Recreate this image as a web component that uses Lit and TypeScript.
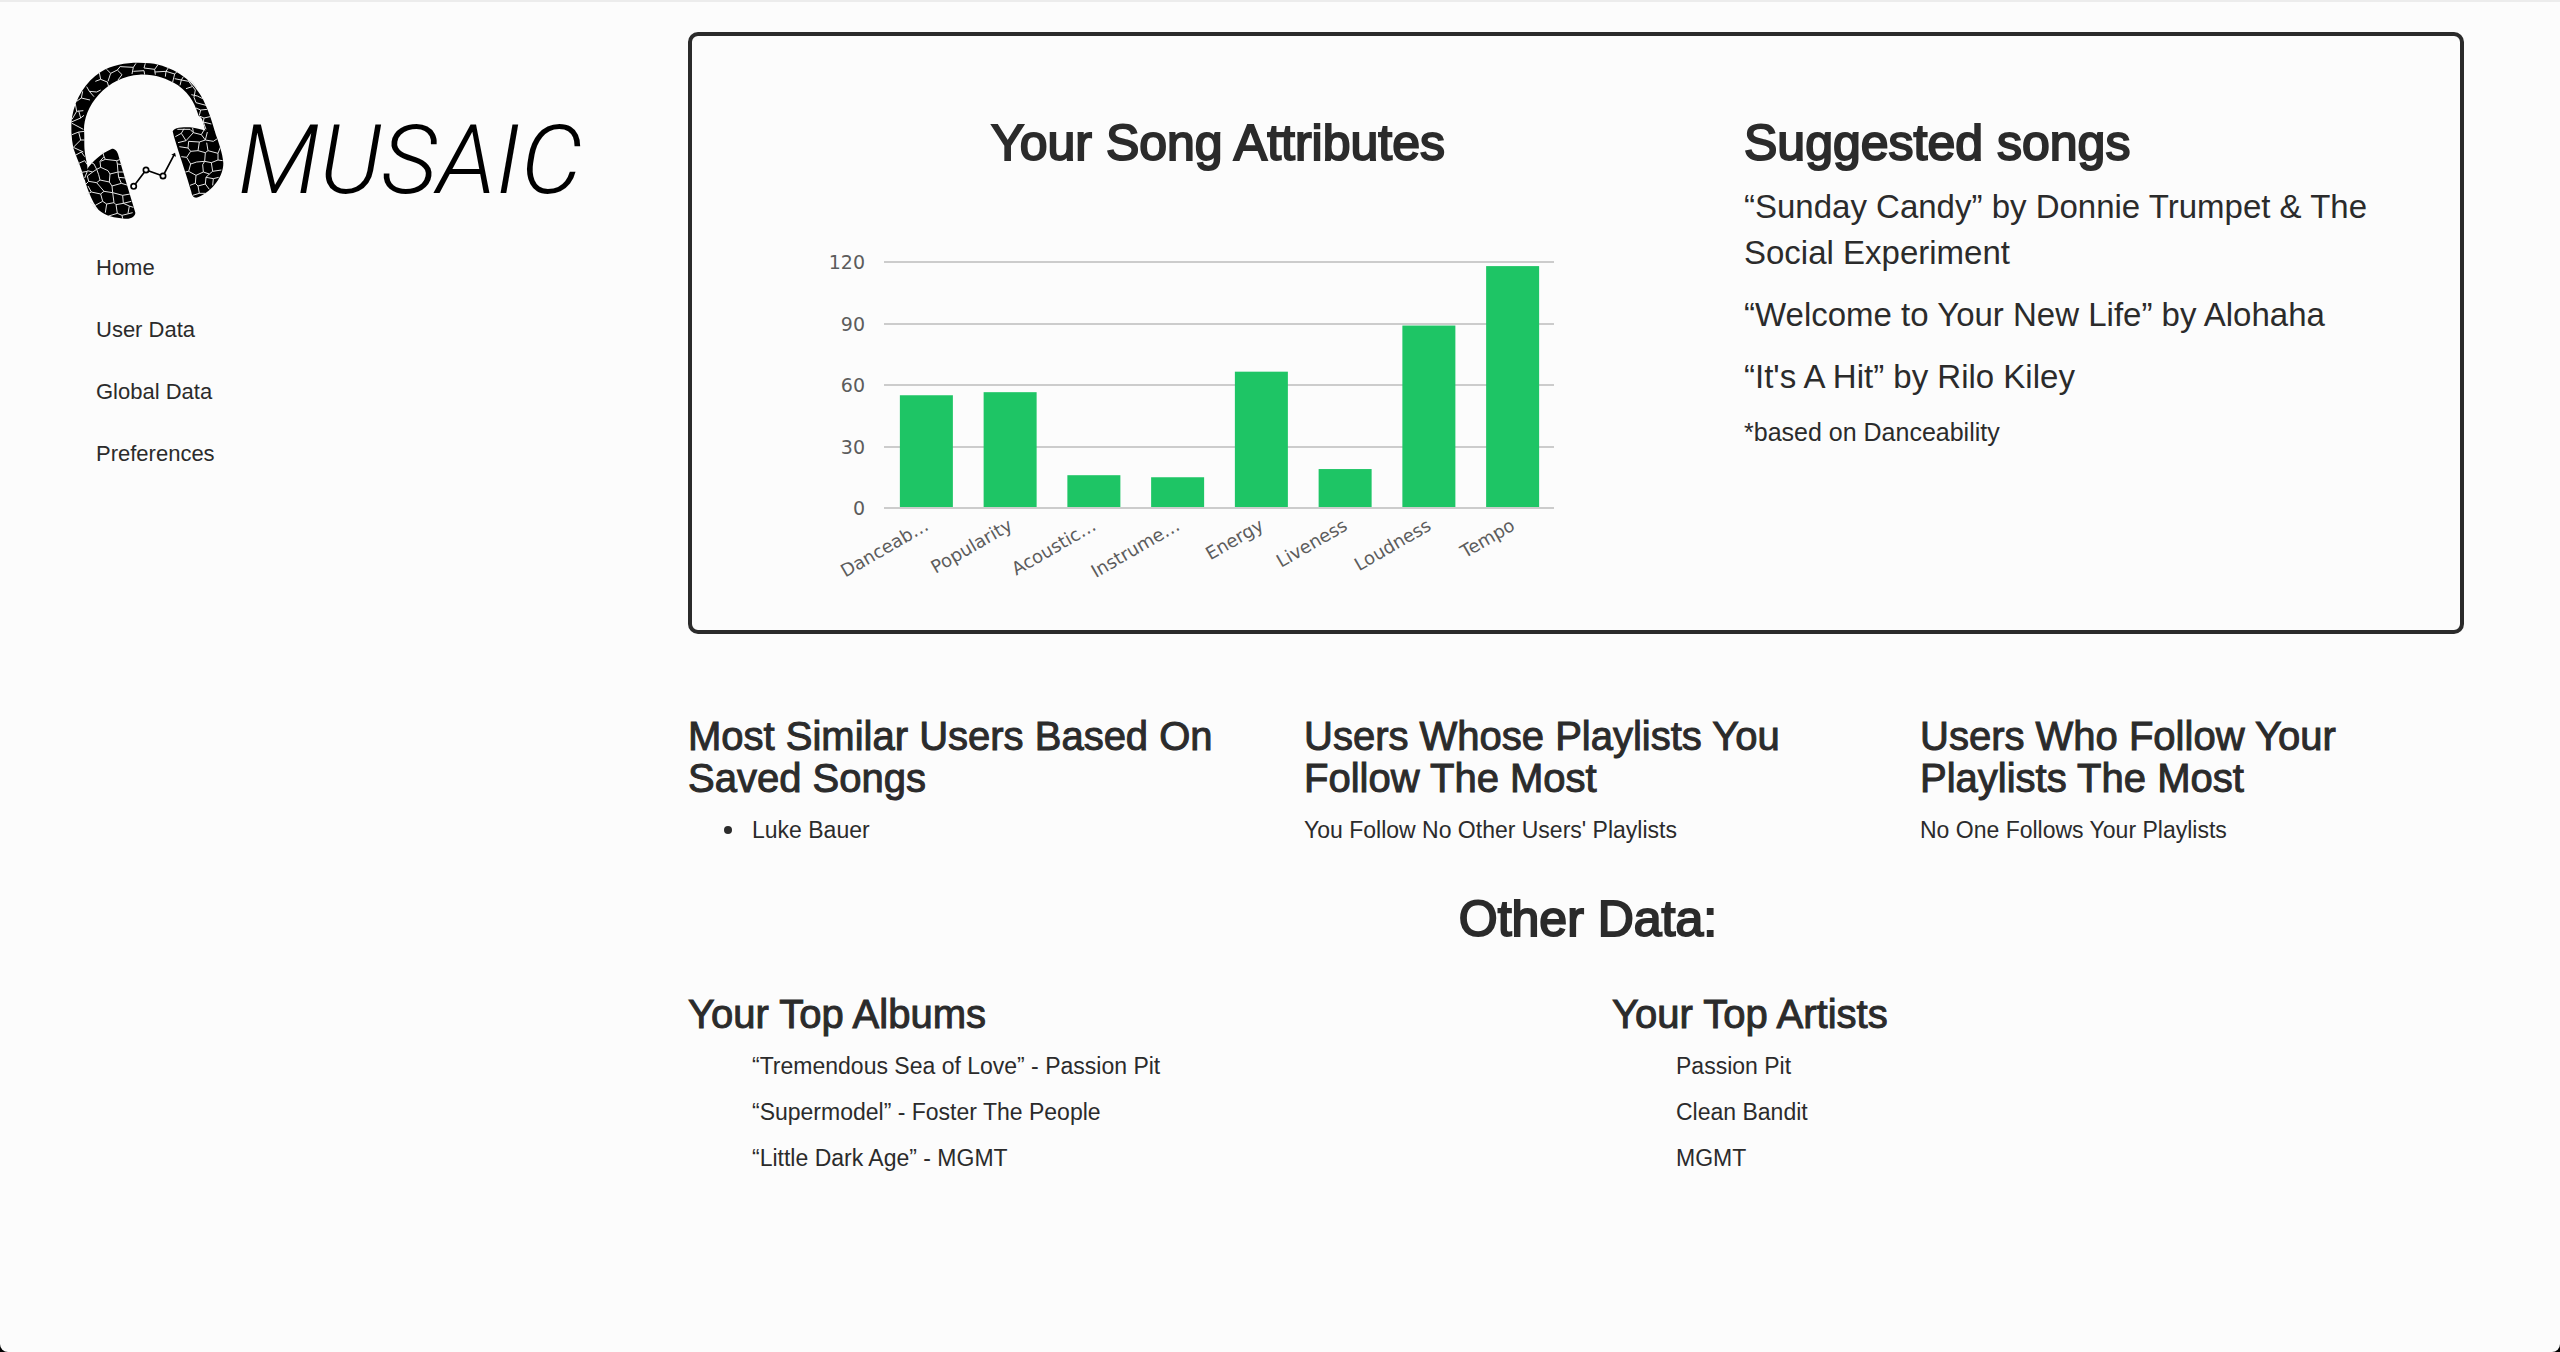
import { LitElement, html, svg, css } from "lit";
import { customElement } from "lit/decorators.js";

const NAV = ["Home", "User Data", "Global Data", "Preferences"];

const SONGS = [
  "“Sunday Candy” by Donnie Trumpet & The Social Experiment",
  "“Welcome to Your New Life” by Alohaha",
  "“It's A Hit” by Rilo Kiley",
];

const ATTRIBUTES: [string, number][] = [
  ["Danceab…", 55],
  ["Popularity", 56.5],
  ["Acoustic…", 16],
  ["Instrume…", 15],
  ["Energy", 66.5],
  ["Liveness", 19],
  ["Loudness", 89],
  ["Tempo", 118],
];

const ALBUMS = [
  "“Tremendous Sea of Love” - Passion Pit",
  "“Supermodel” - Foster The People",
  "“Little Dark Age” - MGMT",
];

const ARTISTS = ["Passion Pit", "Clean Bandit", "MGMT"];

@customElement("musaic-logo")
export class MusaicLogo extends LitElement {
  static styles = css`
    :host { display: flex; align-items: flex-start; }
    .mark { width: 156px; height: 160px; flex: none; }
    .word {
      margin: 42px 0 0 12px;
      font: italic 300 97px/112px Roboto, sans-serif;
      color: #000;
    }
    .cells { fill: none; stroke: #e4e4e4; stroke-width: 3; stroke-linejoin: round; }
  `;

  render() {
    return html`
      <svg class="mark" viewBox="32 38 468 480" role="img" aria-label="Headphones">
        <path d="M75 392 C66 352 50 322 42 296 C36 266 34 234 38 204 C48 146 78 98 124 68 C168 40 226 38 272 42 C340 50 396 90 424 138 C446 176 460 222 468 252 L438 244 C432 222 430 204 418 200 C410 174 396 136 356 108 C320 86 282 74 240 76 C196 78 150 100 118 136 C88 168 74 210 74 240 C76 268 74 286 76 304 C78 328 86 346 84 362 Z"/>
        <path d="M82 362 C98 336 126 312 158 298 C166 298 172 302 176 314 C192 372 210 430 228 490 C228 500 216 510 196 508 C166 506 138 500 118 482 C96 456 78 404 74 380 Z"/>
        <path d="M340 246 C346 234 366 234 392 234 C412 236 430 242 442 244 L466 246 C478 280 490 312 492 342 C492 380 462 424 416 444 C404 448 398 440 396 428 C380 370 360 318 344 262 Z"/>
        <g class="cells">
          <path d="M38 210 L52 186 L72 184 M52 186 L48 164 M52 156 L66 146 L92 152 M66 146 L70 126 M82 112 L90 126 L112 128 L124 122 M90 126 L104 142 M108 96 L124 90 L144 98 L148 112 M124 90 L120 70 M142 60 L154 72 L146 96 M154 72 L174 62 L188 76 L176 92 M174 62 L184 50 M184 52 L222 54 L218 74 M222 54 L230 42 M222 66 L254 64 L256 76 M254 56 L258 42 M254 56 L286 60 L288 76 M286 60 L296 46 M286 68 L320 66 L318 82 M320 66 L328 54 M320 66 L346 74 L340 98 M346 74 L354 66 M346 88 L366 92 L362 108 M366 92 L388 96 L408 122 L404 144 M366 92 L372 82 M380 118 L398 112 M386 94 L398 96 L412 116 M396 136 L414 140 L434 150 M404 144 L410 160 L440 168 M410 176 L424 182 L444 180 M424 182 L420 198 M420 200 L434 206 L452 202 M434 206 L432 218 L456 224 M432 218 L440 240"/>
          <path d="M36 218 L64 206 L74 198 M64 206 L58 184 M38 222 L72 240 M38 256 L58 248 L76 246 M58 248 L64 272 L76 272 M64 272 L42 294 L72 308 M48 318 L66 308 L76 322 M54 344 L76 334 L84 346 M62 370 L84 366 L76 386"/>
          <path d="M84 364 L100 368 L112 360 L104 344 L96 340 M112 360 L124 354 L122 336 L134 322 L130 308 M134 322 L138 330 L172 334 L184 330 M138 330 L124 336 M172 334 L174 344 L190 346 M174 344 L176 368 L194 368 M176 368 L152 374 L146 364 L124 354 M152 374 L150 398 L122 392 L112 400 L88 396 L84 380 L100 368 M88 396 L80 404 M122 392 L118 376 L112 360 M150 398 L158 410 L186 402 L206 408 M176 368 L178 384 L200 386 M178 384 L186 402 M158 410 L160 430 L134 426 L112 400 M134 426 L124 434 L96 428 L86 410 M96 428 L84 434 M124 434 L130 456 L108 468 L92 458 M130 456 L142 464 L164 460 L160 430 L190 438 L212 434 M190 438 L192 462 L216 456 M192 462 L170 466 L164 460 M142 464 L138 490 M170 466 L174 492 L148 500 M174 492 L188 498 L220 490 M192 462 L210 470 L222 474 M210 470 L206 492 M188 498 L190 508 M100 468 L112 480"/>
          <path d="M348 262 L366 252 L374 238 M366 252 L380 274 L356 280 M380 274 L402 250 L400 236 M402 250 L426 256 L434 242 M402 250 L392 240 L354 240 M426 256 L438 272 L462 276 L474 268 M438 272 L444 248 M438 272 L420 278 L416 304 L394 306 L386 296 L360 292 M386 296 L388 276 L420 278 M416 304 L438 310 L446 304 L442 280 M446 304 L476 312 L484 292 M438 310 L436 336 L412 338 L394 344 L382 324 L394 306 M382 324 L366 322 M394 344 L388 366 L410 378 L432 368 L430 346 L436 336 L456 340 L476 332 L476 312 M476 332 L490 334 M456 340 L460 366 L486 362 M460 366 L450 374 L432 368 M388 366 L378 368 M410 378 L408 402 L392 408 M408 402 L416 410 L438 404 L440 384 L450 374 M440 384 L462 388 L478 384 M462 388 L460 408 M416 410 L420 432 L438 432 M438 404 L450 420 M400 438 L420 432"/>
        </g>
        <path d="M223 411 L260 362 L311 380 L345 315" fill="none" stroke="#000" stroke-width="5"/>
        <g fill="#fcfcfc" stroke="#000" stroke-width="5">
          <circle cx="223" cy="411" r="8"/><circle cx="260" cy="362" r="8"/><circle cx="311" cy="380" r="8"/>
        </g>
        <path d="M336 316 L347 310 L350 322 Z"/>
      </svg>
      <span class="word">MUSAIC</span>
    `;
  }
}

@customElement("attribute-chart")
export class AttributeChart extends LitElement {
  static styles = css`
    :host { display: block; }
    .chart { display: block; width: 100%; height: auto; overflow: visible; }
    .tick { font: 19px "DejaVu Sans", Verdana, sans-serif; fill: #5c5c5c; }
    .label { font: 18px "DejaVu Sans", Verdana, sans-serif; fill: #5c5c5c; }
    .grid { stroke: #ccc; stroke-width: 2; }
    .bar { fill: #1ec565; }
  `;

  render() {
    const left = 46, width = 670, base = 283, unit = 246 / 120;
    const slot = width / ATTRIBUTES.length;
    return html`
      <svg class="chart" viewBox="0 0 760 363" role="img" aria-label="Your song attributes">
        ${[0, 30, 60, 90, 120].map((v) => {
          const y = Math.round(base - v * unit);
          return svg`
            <line class="grid" x1=${left} x2=${left + width} y1=${y} y2=${y}></line>
            <text class="tick" x="27" y=${y + 7} text-anchor="end">${v}</text>`;
        })}
        ${ATTRIBUTES.map(([name, v], i) => {
          const mid = left + slot * (i + 0.5);
          const height = v * unit - 1;
          return svg`
            <rect class="bar" x=${mid - 26} width="53" y=${base - 1 - height} height=${height}></rect>
            <text class="label" text-anchor="end" transform="translate(${mid + 4} ${base + 21}) rotate(-30)">${name}</text>`;
        })}
      </svg>
    `;
  }
}

@customElement("app-root")
export class AppRoot extends LitElement {
  static styles = css`
    :host {
      display: block;
      background: #000;
      color: #2b2b2b;
      font: 23px/30px "Liberation Sans", Arial, sans-serif;
    }
    * { box-sizing: border-box; }
    .page {
      display: grid;
      grid-template-columns: 616px minmax(0, 1fr);
      column-gap: 72px;
      min-height: 100vh;
      padding-bottom: 48px;
      border-top: 2px solid #ececec;
      border-radius: 0 0 8px 8px;
      background: #fcfcfc;
    }
    .side { padding: 60px 0 0 70px; }
    .menu { display: flex; flex-direction: column; gap: 32px; margin-top: 31px; padding-left: 26px; font-size: 22px; }
    .menu a { color: inherit; text-decoration: none; }
    h1, h2, h3, p, ul { margin: 0; padding: 0; font-weight: 400; }
    h1, h2 { font-size: 50px; line-height: 54px; -webkit-text-stroke: 2px #2b2b2b; }
    h3 { font-size: 40px; line-height: 42px; -webkit-text-stroke: 1px #2b2b2b; }
    .main { padding: 30px 96px 0 0; }
    .card {
      display: grid;
      grid-template-columns: 1052px minmax(0, 1fr);
      padding: 80px 88px 42px 0;
      border: 4px solid #2b2b2b;
      border-radius: 10px;
    }
    .plot { display: flex; flex-direction: column; align-items: center; }
    .plot attribute-chart { width: 760px; margin-top: 55px; }
    .songs { display: flex; flex-direction: column; gap: 16px; margin-top: 14px; font-size: 33px; line-height: 46px; list-style: none; }
    .note { margin-top: 14px; font-size: 25px; line-height: 36px; }
    .thirds { display: grid; grid-template-columns: repeat(3, minmax(0, 1fr)); column-gap: 72px; margin-top: 81px; }
    .halves { display: grid; grid-template-columns: repeat(2, minmax(0, 1fr)); column-gap: 72px; margin-top: 47px; }
    .list { margin-top: 16px; padding-left: 64px; list-style: none; }
    .text { margin-top: 16px; }
    .plain { display: flex; flex-direction: column; gap: 16px; }
    .bulleted { padding-left: 36px; }
    .bulleted li { display: flex; align-items: center; gap: 20px; }
    .bulleted li::before { content: ""; width: 8px; height: 8px; border-radius: 50%; background: #2b2b2b; }
    .other { margin-top: 47px; padding-left: 24px; text-align: center; }
  `;

  render() {
    return html`
      <div class="page">
        <aside class="side">
          <musaic-logo></musaic-logo>
          <nav class="menu">${NAV.map((n) => html`<a href="#">${n}</a>`)}</nav>
        </aside>
        <main class="main">
          <section class="card">
            <div class="plot">
              <h1>Your Song Attributes</h1>
              <attribute-chart></attribute-chart>
            </div>
            <div>
              <h2>Suggested songs</h2>
              <ul class="songs">${SONGS.map((s) => html`<li>${s}</li>`)}</ul>
              <p class="note">*based on Danceability</p>
            </div>
          </section>
          <section class="thirds">
            <div>
              <h3>Most Similar Users Based On Saved Songs</h3>
              <ul class="list bulleted"><li>Luke Bauer</li></ul>
            </div>
            <div>
              <h3>Users Whose Playlists You Follow The Most</h3>
              <p class="text">You Follow No Other Users' Playlists</p>
            </div>
            <div>
              <h3>Users Who Follow Your Playlists The Most</h3>
              <p class="text">No One Follows Your Playlists</p>
            </div>
          </section>
          <h2 class="other">Other Data:</h2>
          <section class="halves">
            <div>
              <h3>Your Top Albums</h3>
              <ul class="list plain">${ALBUMS.map((a) => html`<li>${a}</li>`)}</ul>
            </div>
            <div>
              <h3>Your Top Artists</h3>
              <ul class="list plain">${ARTISTS.map((a) => html`<li>${a}</li>`)}</ul>
            </div>
          </section>
        </main>
      </div>
    `;
  }
}
